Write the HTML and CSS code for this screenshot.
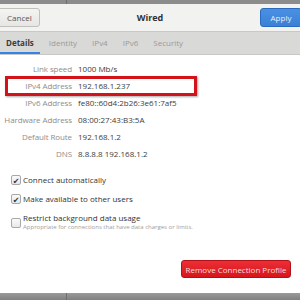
FILE: index.html
```html
<!DOCTYPE html>
<html lang="en">
<head>
    <meta charset="UTF-8">
    <title>Wired</title>
    <link rel="stylesheet" href="styles.css">
</head>
<body>
    <div class="topstrip"><span class="split"></span></div>

    <!-- header -->
    <div class="header">
        <button class="btn cancel">Cancel</button>
        <div class="title">Wired</div>
        <button class="btn apply">Apply</button>
    </div>

    <!-- tabs -->
    <div class="tabs">
        <div class="tab active">Details</div>
        <div class="tab">Identity</div>
        <div class="tab">IPv4</div>
        <div class="tab">IPv6</div>
        <div class="tab">Security</div>
    </div>

    <div class="content">
        <div class="info">
            <div class="row"><span class="label">Link speed</span><span class="value">1000 Mb/s</span></div>
            <div class="row marked"><span class="label">IPv4 Address</span><span class="value">192.168.1.237</span></div>
            <div class="row"><span class="label">IPv6 Address</span><span class="value">fe80::60d4:2b26:3e61:7af5</span></div>
            <div class="row"><span class="label">Hardware Address</span><span class="value">08:00:27:43:B3:5A</span></div>
            <div class="row"><span class="label">Default Route</span><span class="value">192.168.1.2</span></div>
            <div class="row"><span class="label">DNS</span><span class="value">8.8.8.8 192.168.1.2</span></div>
        </div>

        <div class="checks">
            <label class="check"><span class="box on">&#10004;</span>Connect automatically</label>
            <label class="check"><span class="box on">&#10004;</span>Make available to other users</label>
            <label class="check two">
                <span class="box"></span>
                <span>
                    Restrict background data usage
                    <small>Appropriate for connections that have data charges or limits.</small>
                </span>
            </label>
        </div>

        <div class="footer">
            <button class="btn remove">Remove Connection Profile</button>
        </div>
    </div>

    <div class="bottomstrip"><span class="split"></span></div>
</body>
</html>
```

FILE: styles.css
```css
body {
    margin: 0;
    width: 300px;
    height: 300px;
    overflow: hidden;
    font-family: "Open Sans", "DejaVu Sans", sans-serif;
    font-size: 8px;
    color: #2e3436;
    background-color: #fff;
    display: flex;
    flex-direction: column;
}
.topstrip, .bottomstrip {
    background-color: #8c8c8c;
    display: flex;
}
.topstrip {
    height: 4px;
}
.bottomstrip {
    height: 7px;
    margin-top: auto;
    background: linear-gradient(#9a9a9a, #808080);
}
.split {
    width: 66px;
    border-right: 1px solid #6e6e6e;
}
.header {
    height: 27px;
    background-color: #f2f2f1;
    display: flex;
    align-items: center;
    justify-content: space-between;
    border-bottom: 1px solid #c8c8c8;
}
.title {
    font-weight: bold;
    font-size: 9px;
    color: #2e3436;
}
.btn {
    font-family: inherit;
    font-size: 8px;
    height: 19px;
    padding: 0 9px;
    border-radius: 3px;
    border: 1px solid #c0c0bd;
    background: linear-gradient(#f4f4f3, #e6e6e4);
    color: #555;
}
.cancel {
    margin-left: -3px;
    width: 43px;
}
.apply {
    width: 42px;
    margin-right: -2px;
    color: #e8f0fb;
    border-color: #2a6bbf;
    background: linear-gradient(#4a90e2, #3a80d6);
}
.tabs {
    height: 22px;
    background-color: #d9d9d8;
    display: flex;
    padding-left: 0;
    border-bottom: 1px solid #c8c8c8;
}
.tab {
    color: #9a9a9a;
    padding: 0 6px;
    margin-right: 3px;
    display: flex;
    align-items: center;
    font-size: 8px;
    border-bottom: 2px solid transparent;
}
.tab.active {
    color: #3b3b3b;
    font-weight: bold;
    border-bottom-color: #3584e4;
}
.content {
    display: flex;
    flex-direction: column;
}
.info {
    padding-top: 5px;
}
.row {
    display: flex;
    height: 17px;
    align-items: center;
    position: relative;
}
/* red highlight frame drawn over the row */
.row.marked::after {
    content: "";
    position: absolute;
    left: 5px;
    top: -1px;
    width: 186px;
    height: 14px;
    border: 3px solid #d3121a;
    box-shadow: 1px 1px 2px rgba(0, 0, 0, 0.35);
}
.label {
    width: 72px;
    text-align: right;
    color: #8d8d8d;
    flex-shrink: 0;
    white-space: nowrap;
    letter-spacing: -0.1px;
}
.value {
    margin-left: 6px;
    color: #3c3c3c;
    white-space: nowrap;
}
.checks {
    display: flex;
    flex-direction: column;
    gap: 8px;
    padding: 12px 0 0 11px;
}
.check {
    display: flex;
    align-items: center;
    color: #333;
    height: 11px;
}
.check.two {
    align-items: flex-start;
    height: auto;
    line-height: 11px;
}
.check small {
    display: block;
    font-size: 6px;
    line-height: 9px;
    color: #a0a0a0;
}
.box {
    width: 10px;
    height: 10px;
    border: 1px solid #a8a8a8;
    border-radius: 2px;
    background: linear-gradient(#fafafa, #e8e8e8);
    margin-right: 2px;
    font-size: 8px;
    line-height: 10px;
    text-align: center;
    color: #333;
    box-sizing: border-box;
    flex-shrink: 0;
}
.check.two .box {
    margin-top: 6px;
}
.footer {
    display: flex;
    justify-content: flex-end;
    padding: 28px 9px 0 0;
}
.remove {
    width: 110px;
    height: 18px;
    color: #f7dcdc;
    border-color: #b0121a;
    background: linear-gradient(#ec2e35, #d8151d);
    padding: 0;
}
```
